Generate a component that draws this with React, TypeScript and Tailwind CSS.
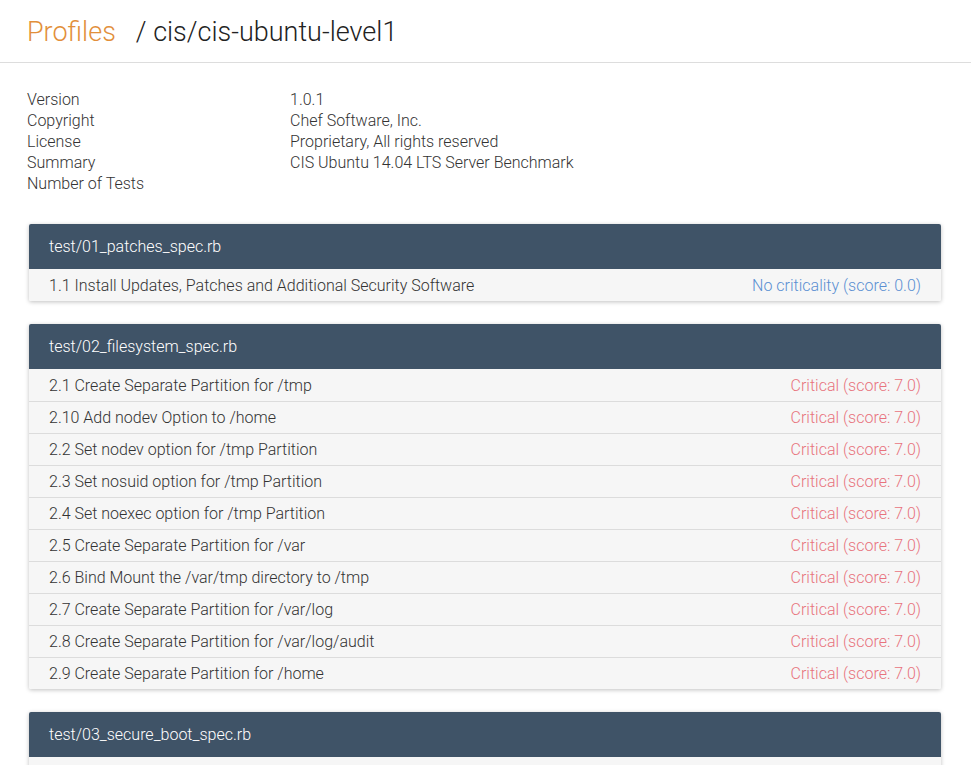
import React from "react";

const rows2 = [
  "2.1 Create Separate Partition for /tmp",
  "2.10 Add nodev Option to /home",
  "2.2 Set nodev option for /tmp Partition",
  "2.3 Set nosuid option for /tmp Partition",
  "2.4 Set noexec option for /tmp Partition",
  "2.5 Create Separate Partition for /var",
  "2.6 Bind Mount the /var/tmp directory to /tmp",
  "2.7 Create Separate Partition for /var/log",
  "2.8 Create Separate Partition for /var/log/audit",
  "2.9 Create Separate Partition for /home",
];

function Card({ title, rows }: { title: string; rows: { name: string; crit: string; critical: boolean }[] }) {
  return (
    <div className="bg-white rounded-[2px] shadow-[0_1px_4px_rgba(0,0,0,0.25)] overflow-hidden">
      <div className="h-[45px] bg-[#3f5367] text-white text-[16px] flex items-center px-[20px] pt-[1px]">{title}</div>
      {rows.map((r, i) => (
        <div
          key={i}
          className={`h-[32px] bg-[#f6f6f6] flex items-center justify-between px-[20px] pt-[1px] text-[16px] text-[#333] ${i > 0 ? "border-t border-[#dcdcdc]" : ""}`}
        >
          <span>{r.name}</span>
          <span className={r.critical ? "text-[#e8737d]" : "text-[#5a8fd2]"}>{r.crit}</span>
        </div>
      ))}
    </div>
  );
}

export default function App() {
  const meta: [string, string][] = [
    ["Version", "1.0.1"],
    ["Copyright", "Chef Software, Inc."],
    ["License", "Proprietary, All rights reserved"],
    ["Summary", "CIS Ubuntu 14.04 LTS Server Benchmark"],
    ["Number of Tests", ""],
  ];
  return (
    <div className="w-[971px] h-[765px] overflow-hidden bg-white font-['Roboto',sans-serif] font-light text-[#333]">
      <div className="h-[63px] border-b border-[#dddddd] flex items-center pl-[27px] pt-[2px] text-[27px]">
        <span className="text-[#e28f3a]">Profiles</span>
        <span className="ml-[20px] text-[#222]">/ cis/cis-ubuntu-level1</span>
      </div>
      <div className="pl-[27px] pt-[26px] text-[16px] leading-[21px]">
        {meta.map(([k, v]) => (
          <div key={k} className="flex h-[21px]">
            <span className="w-[263px]">{k}</span>
            <span>{v}</span>
          </div>
        ))}
      </div>
      <div className="pl-[29px] pr-[30px] pt-[30px] flex flex-col gap-[23px]">
        <Card
          title="test/01_patches_spec.rb"
          rows={[{ name: "1.1 Install Updates, Patches and Additional Security Software", crit: "No criticality (score: 0.0)", critical: false }]}
        />
        <Card
          title="test/02_filesystem_spec.rb"
          rows={rows2.map((n) => ({ name: n, crit: "Critical (score: 7.0)", critical: true }))}
        />
        <Card
          title="test/03_secure_boot_spec.rb"
          rows={[{ name: "", crit: "", critical: true }]}
        />
      </div>
    </div>
  );
}
